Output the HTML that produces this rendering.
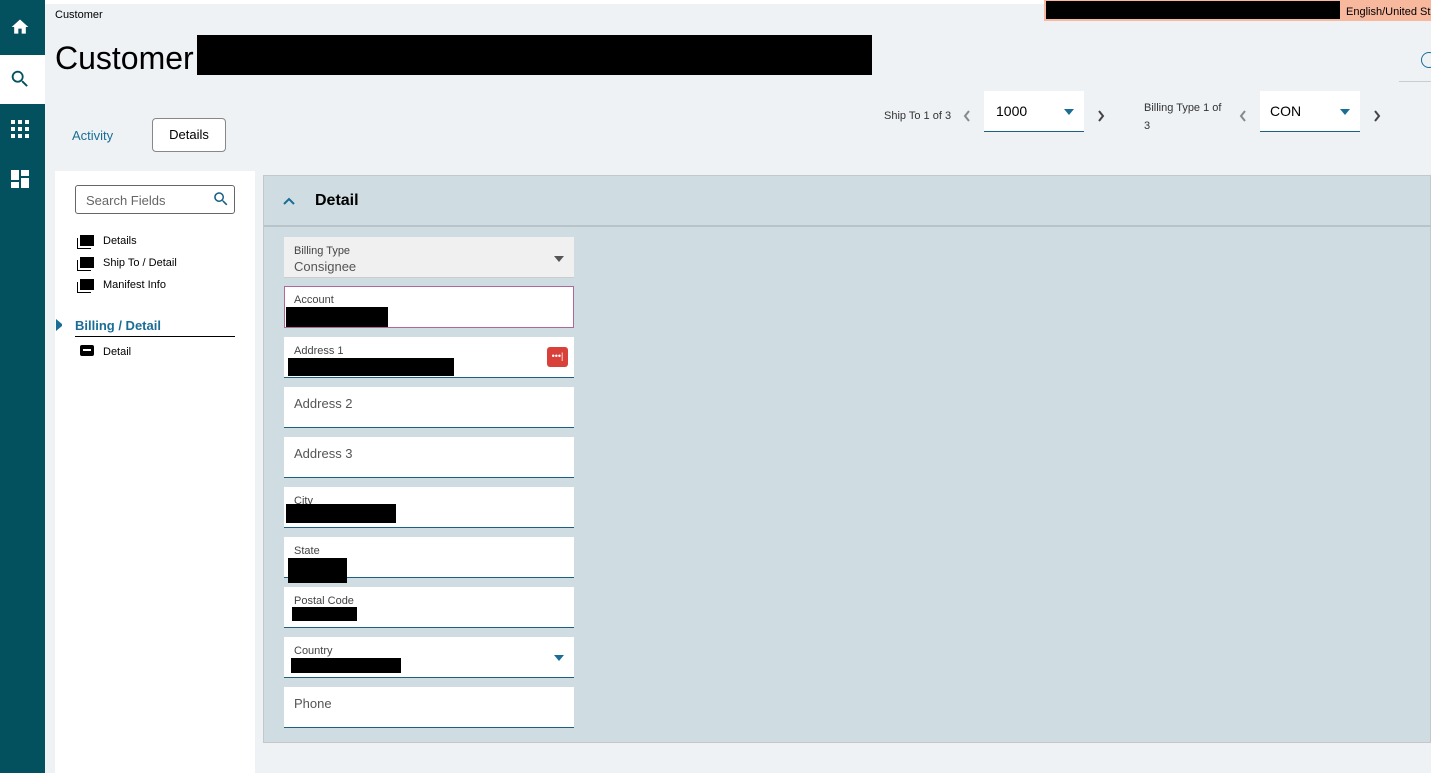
<!DOCTYPE html>
<html><head><meta charset="utf-8"><style>
*{box-sizing:border-box;margin:0;padding:0}
body{width:1431px;height:773px;overflow:hidden;background:#eef2f5;font-family:"Liberation Sans",sans-serif;position:relative;color:#000}
.abs{position:absolute}
.side{left:0;top:0;width:45px;height:773px;background:#03505f}
.blk{background:#000}
.fld{position:absolute;left:284px;width:290px;height:41px;background:#fff;border-bottom:1px solid #1a5f84}
.lbl{position:absolute;left:10px;top:8px;font-size:11px;color:#444}
.ph{position:absolute;left:10px;top:9px;font-size:13px;color:#555}
.nav{position:absolute;left:103px;font-size:11px}
.ic{position:absolute;left:80px;width:14px;height:11px;background:#000;box-shadow:-2px 2px 0 -0px #fff,-3px 3px 0 0 #000}
</style></head><body>
<div class="abs" style="left:0;top:0;width:1431px;height:4px;background:#fff"></div>
<div class="abs side"></div>
<div class="abs" style="left:0;top:55px;width:45px;height:49px;background:#fff"></div>
<svg class="abs" style="left:9px;top:17px" width="22" height="20" viewBox="0 0 24 24"><path d="M10 20v-6h4v6h5v-8h3L12 3 2 12h3v8z" fill="#fff"/></svg>
<svg class="abs" style="left:9px;top:68px" width="22" height="22" viewBox="0 0 24 24"><path d="M15.5 14h-.8l-.3-.3A6.5 6.5 0 1 0 9.5 16a6.5 6.5 0 0 0 4.2-1.6l.3.3v.8l5 5 1.5-1.5-5-5zm-6 0a4.5 4.5 0 1 1 0-9 4.5 4.5 0 0 1 0 9z" fill="#03505f"/></svg>
<svg class="abs" style="left:11px;top:120px" width="18" height="18" viewBox="0 0 18 18" fill="#fff"><rect x="0" y="0" width="4" height="4"/><rect x="7" y="0" width="4" height="4"/><rect x="14" y="0" width="4" height="4"/><rect x="0" y="7" width="4" height="4"/><rect x="7" y="7" width="4" height="4"/><rect x="14" y="7" width="4" height="4"/><rect x="0" y="14" width="4" height="4"/><rect x="7" y="14" width="4" height="4"/><rect x="14" y="14" width="4" height="4"/></svg>
<svg class="abs" style="left:11px;top:170px" width="18" height="18" viewBox="0 0 18 18" fill="#fff"><rect x="0" y="0" width="8" height="10"/><rect x="10" y="0" width="8" height="6"/><rect x="0" y="12" width="8" height="6"/><rect x="10" y="8" width="8" height="10"/></svg>
<div class="abs" style="left:55px;top:9px;font-size:11px">Customer</div>
<div class="abs" style="left:55px;top:40px;font-size:32px">Customer</div>
<div class="abs blk" style="left:197px;top:35px;width:675px;height:40px"></div>
<div class="abs" style="left:1044px;top:0;width:387px;height:21px;background:#f7b89e"></div>
<div class="abs blk" style="left:1046px;top:1px;width:294px;height:18px"></div>
<div class="abs" style="left:1346px;top:6px;font-size:11px;white-space:nowrap">English/United St</div>
<div class="abs" style="left:1399px;top:81px;width:32px;height:1px;background:#ccc"></div>
<div class="abs" style="left:1421px;top:52px;width:16px;height:16px;border:1.5px solid #1a6e96;border-radius:50%"></div>
<div class="abs" style="left:72px;top:128px;font-size:13px;color:#1a6e96">Activity</div>
<div class="abs" style="left:152px;top:118px;width:74px;height:34px;border:1px solid #888;border-radius:4px;background:#fff;font-size:13px;text-align:center;line-height:32px">Details</div>
<div class="abs" style="left:884px;top:110px;font-size:11px;color:#333">Ship To 1 of 3</div>
<svg class="abs" style="left:962px;top:109px" width="10" height="14" viewBox="0 0 10 14"><path d="M7 2L3 7l4 5" stroke="#888" stroke-width="2" fill="none"/></svg>
<div class="abs" style="left:984px;top:91px;width:100px;height:41px;background:#fff;border-bottom:1px solid #1a5f84"><span style="position:absolute;left:12px;top:12px;font-size:14px">1000</span><span style="position:absolute;left:80px;top:18px;border:5px solid transparent;border-top:6px solid #1a6e96"></span></div>
<svg class="abs" style="left:1096px;top:109px" width="10" height="14" viewBox="0 0 10 14"><path d="M3 2l4 5-4 5" stroke="#444" stroke-width="2" fill="none"/></svg>
<div class="abs" style="left:1144px;top:99px;font-size:11px;color:#333;line-height:18px;width:90px">Billing Type 1 of<br>3</div>
<svg class="abs" style="left:1238px;top:109px" width="10" height="14" viewBox="0 0 10 14"><path d="M7 2L3 7l4 5" stroke="#888" stroke-width="2" fill="none"/></svg>
<div class="abs" style="left:1260px;top:91px;width:100px;height:41px;background:#fff;border-bottom:1px solid #1a5f84"><span style="position:absolute;left:10px;top:12px;font-size:14px">CON</span><span style="position:absolute;left:80px;top:18px;border:5px solid transparent;border-top:6px solid #1a6e96"></span></div>
<svg class="abs" style="left:1372px;top:109px" width="10" height="14" viewBox="0 0 10 14"><path d="M3 2l4 5-4 5" stroke="#444" stroke-width="2" fill="none"/></svg>
<div class="abs" style="left:55px;top:171px;width:200px;height:602px;background:#fff"></div>
<div class="abs" style="left:75px;top:185px;width:160px;height:29px;border:1px solid #666;border-radius:3px"><span style="position:absolute;left:10px;top:7px;font-size:13px;color:#666">Search Fields</span></div>
<svg class="abs" style="left:212px;top:190px" width="18" height="18" viewBox="0 0 24 24"><path d="M15.5 14h-.8l-.3-.3A6.5 6.5 0 1 0 9.5 16a6.5 6.5 0 0 0 4.2-1.6l.3.3v.8l5 5 1.5-1.5-5-5zm-6 0a4.5 4.5 0 1 1 0-9 4.5 4.5 0 0 1 0 9z" fill="#1a5f84"/></svg>
<div class="ic" style="top:235px"></div><div class="nav" style="top:235px">Details</div>
<div class="ic" style="top:257px"></div><div class="nav" style="top:257px">Ship To / Detail</div>
<div class="ic" style="top:279px"></div><div class="nav" style="top:279px">Manifest Info</div>
<div class="abs" style="left:56px;top:319px;border:5px solid transparent;border-left:6px solid #1a6e96;border-right:0;height:12px"></div>
<div class="abs" style="left:75px;top:318px;font-size:13px;font-weight:bold;color:#1a6e96">Billing / Detail</div>
<div class="abs" style="left:75px;top:336px;width:160px;height:1px;background:#000"></div>
<div class="abs" style="left:80px;top:345px;width:14px;height:11px;background:#000;border-radius:2px"><div style="position:absolute;left:3px;top:4px;width:8px;height:2px;background:#fff"></div></div>
<div class="nav" style="top:346px">Detail</div>
<div class="abs" style="left:263px;top:175px;width:1168px;height:568px;background:#cfdde2;border:1px solid #c4c8ca"></div>
<div class="abs" style="left:264px;top:176px;width:1167px;height:51px;border-bottom:2px solid #b8c4c9"></div>
<svg class="abs" style="left:282px;top:196px" width="14" height="10" viewBox="0 0 14 10"><path d="M2 8l5-5 5 5" stroke="#1a6e96" stroke-width="2" fill="none"/></svg>
<div class="abs" style="left:315px;top:192px;font-size:16px;font-weight:bold">Detail</div>
<div class="fld" style="top:237px;background:#f0f0f0;border-bottom:1px solid #ccc"><div class="lbl">Billing Type</div><div style="position:absolute;left:10px;top:22px;font-size:13px;color:#555">Consignee</div><span style="position:absolute;left:270px;top:19px;border:5px solid transparent;border-top:6px solid #555"></span></div>
<div class="fld" style="top:286px;height:42px;border:1px solid #b0679a"><div class="lbl" style="left:9px;top:7px">Account</div><div class="blk" style="position:absolute;left:1px;top:20px;width:102px;height:20px"></div></div>
<div class="fld" style="top:337px"><div class="lbl">Address 1</div><div class="blk" style="position:absolute;left:4px;top:21px;width:166px;height:18px"></div><div style="position:absolute;left:263px;top:10px;width:21px;height:20px;background:#d9403a;border-radius:3px;color:#fff;font-size:9px;text-align:center;line-height:19px">•••|</div></div>
<div class="fld" style="top:387px"><div class="ph">Address 2</div></div>
<div class="fld" style="top:437px"><div class="ph">Address 3</div></div>
<div class="fld" style="top:487px"><div class="lbl">City</div><div class="blk" style="position:absolute;left:2px;top:17px;width:110px;height:19px"></div></div>
<div class="fld" style="top:537px"><div class="lbl">State</div><div class="blk" style="position:absolute;left:4px;top:21px;width:59px;height:25px"></div></div>
<div class="fld" style="top:587px"><div class="lbl">Postal Code</div><div class="blk" style="position:absolute;left:8px;top:20px;width:65px;height:14px"></div></div>
<div class="fld" style="top:637px"><div class="lbl">Country</div><div class="blk" style="position:absolute;left:7px;top:21px;width:110px;height:15px"></div><span style="position:absolute;left:270px;top:18px;border:5px solid transparent;border-top:6px solid #1a6e96"></span></div>
<div class="fld" style="top:687px"><div class="ph">Phone</div></div>
</body></html>
